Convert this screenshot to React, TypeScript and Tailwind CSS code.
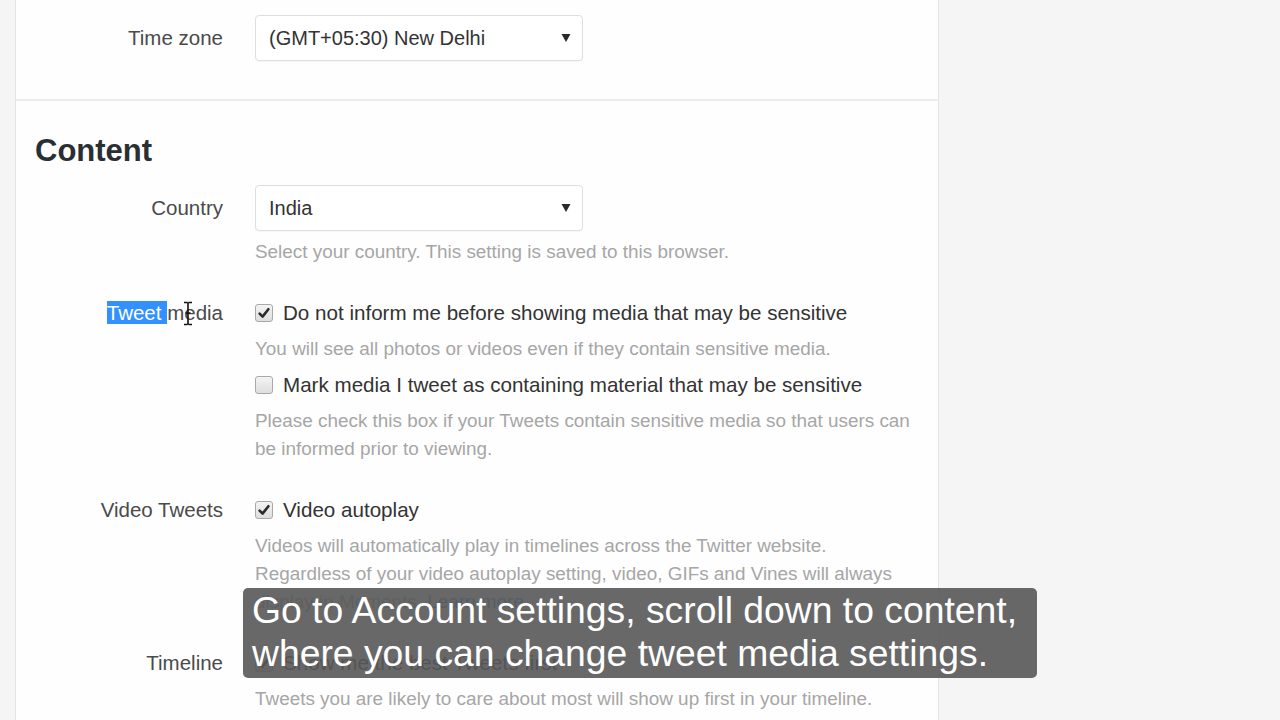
import React from "react";

const font = { fontFamily: '"Liberation Sans", Arial, sans-serif' };

function Caret() {
  return (
    <svg width="10" height="9" viewBox="0 0 10 9" className="absolute right-[11px] top-1/2 -translate-y-1/2">
      <polygon points="0.5,0.5 9.5,0.5 5,8.5" fill="#2a2a2a" />
    </svg>
  );
}

function Select({ value }: { value: string }) {
  return (
    <div className="relative w-[328px] h-[46px] rounded-[4px] border border-[#dcdfe2] bg-white flex items-center pl-[13px] text-[20px] text-[#333] shadow-[0_1px_1px_rgba(0,0,0,0.03)]">
      {value}
      <Caret />
    </div>
  );
}

function Checkbox({ checked }: { checked: boolean }) {
  return (
    <div className="w-[18px] h-[18px] rounded-[3px] border border-[#a9a9a9] bg-gradient-to-b from-[#f4f4f4] to-[#dedede] flex items-center justify-center shrink-0">
      {checked && (
        <svg width="14" height="14" viewBox="0 0 14 14">
          <path d="M2.6 7.6 L5.6 10.6 L11.4 3.2" stroke="#2b2b2b" strokeWidth="2.6" fill="none" strokeLinejoin="round" strokeLinecap="round" />
        </svg>
      )}
    </div>
  );
}

function Label({ children }: { children: React.ReactNode }) {
  return <div className="w-[207px] shrink-0 text-right text-[20.5px] text-[#4a4a4a] leading-[28px] whitespace-nowrap">{children}</div>;
}

function Help({ lines, className = "" }: { lines: React.ReactNode[]; className?: string }) {
  return (
    <div className={"ml-[239px] text-[18.9px] leading-[28px] text-[#a6a6a6] " + className}>
      {lines.map((l, i) => (
        <div key={i} className="whitespace-nowrap">{l}</div>
      ))}
    </div>
  );
}

function CheckRow({ label, text, checked, className = "" }: { label?: React.ReactNode; text: string; checked: boolean; className?: string }) {
  return (
    <div className={"flex items-center h-[28px] " + className}>
      <Label>{label}</Label>
      <div className="ml-[32px] flex items-center gap-[10px]">
        <Checkbox checked={checked} />
        <span className="text-[20.6px] text-[#333] whitespace-nowrap">{text}</span>
      </div>
    </div>
  );
}

export default function App() {
  return (
    <div style={font} className="relative w-[1280px] h-[720px] overflow-hidden bg-[#f5f5f5] flex">
      <div className="ml-[15px] w-[924px] h-full bg-[#fefefe] border-l border-r border-[#e4e4e4]">
        {/* Time zone section */}
        <div className="pt-[15px] pb-[38px] border-b-2 border-[#ececec]">
          <div className="flex items-center">
            <Label>Time zone</Label>
            <div className="ml-[32px]">
              <Select value="(GMT+05:30) New Delhi" />
            </div>
          </div>
        </div>

        {/* Content section */}
        <div>
          <h2 className="ml-[19px] mt-[32px] text-[31px] leading-[36px] font-bold text-[#292f33]">Content</h2>

          <div className="flex items-center mt-[16px]">
            <Label>Country</Label>
            <div className="ml-[32px]">
              <Select value="India" />
            </div>
          </div>
          <Help className="mt-[7px]" lines={["Select your country. This setting is saved to this browser."]} />

          <CheckRow
            className="mt-[33px]"
            checked
            text="Do not inform me before showing media that may be sensitive"
            label={
              <span className="relative">
                <span className="bg-[#3390ff] text-white">Tweet </span>media
                <svg width="12" height="25" viewBox="0 0 12 25" className="absolute left-[75px] top-[0px]">
                  <path d="M2 1.5 H5.2 M6.8 1.5 H10 M6 2 V23 M2 23.5 H5.2 M6.8 23.5 H10 M3.5 12 H8.5" stroke="#111" strokeWidth="1.6" fill="none" />
                  <path d="M5.2 1.5 Q6 1.8 6.8 1.5 M5.2 23.5 Q6 23.2 6.8 23.5" stroke="#111" strokeWidth="1.4" fill="none" />
                </svg>
              </span>
            }
          />
          <Help className="mt-[8px]" lines={["You will see all photos or videos even if they contain sensitive media."]} />

          <CheckRow className="mt-[8px]" checked={false} text="Mark media I tweet as containing material that may be sensitive" />
          <Help
            className="mt-[8px]"
            lines={[
              "Please check this box if your Tweets contain sensitive media so that users can",
              "be informed prior to viewing.",
            ]}
          />

          <CheckRow className="mt-[33px]" label="Video Tweets" checked text="Video autoplay" />
          <Help
            className="mt-[8px]"
            lines={[
              "Videos will automatically play in timelines across the Twitter website.",
              "Regardless of your video autoplay setting, video, GIFs and Vines will always",
              <span>
                display in Moments. <span className="text-[#3b94d9]">Learn more</span>
              </span>,
            ]}
          />

          <CheckRow className="mt-[33px]" label="Timeline" checked text="Show me the best Tweets first" />
          <Help className="mt-[8px]" lines={["Tweets you are likely to care about most will show up first in your timeline."]} />
        </div>
      </div>

      {/* Subtitle overlay */}
      <div className="absolute left-[243px] top-[588px] w-[794px] h-[90px] rounded-[5px] bg-[rgba(88,88,88,0.9)] pl-[9px] pt-[1px] text-[37.3px] leading-[43px] text-white whitespace-nowrap">
        <div>Go to Account settings, scroll down to content,</div>
        <div>where you can change tweet media settings.</div>
      </div>
    </div>
  );
}
